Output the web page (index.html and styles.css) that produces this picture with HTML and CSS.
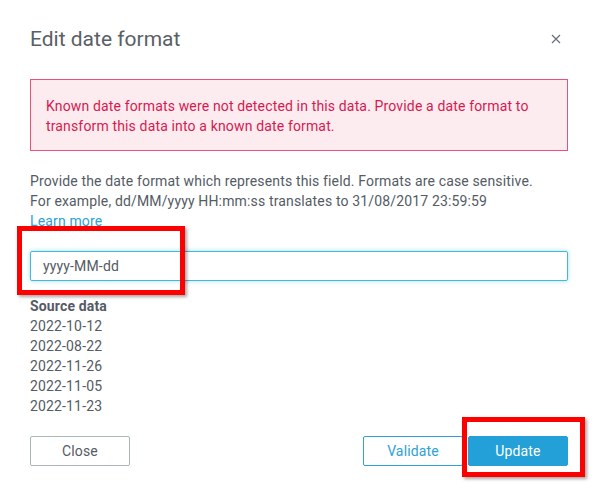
FILE: index.html
```html
<!DOCTYPE html>
<html lang="en">
<head>
    <meta charset="UTF-8">
    <meta name="viewport" content="width=device-width, initial-scale=1.0">
    <title>Edit date format</title>
    <link rel="stylesheet" href="styles.css">
</head>
<body>
    <div class="modal">
        <div class="modal-header">
            <h2>Edit date format</h2>
            <button class="close-x" aria-label="Close">
                <svg width="10" height="10" viewBox="0 0 10 10">
                    <path d="M1 1 L9 9 M9 1 L1 9" stroke="#687078" stroke-width="1.2" fill="none"/>
                </svg>
            </button>
        </div>

        <div class="alert">
            Known date formats were not detected in this data. Provide a date format to
            transform this data into a known date format.
        </div>

        <p class="desc">
            Provide the date format which represents this field. Formats are case sensitive.<br>
            For example, dd/MM/yyyy HH:mm:ss translates to 31/08/2017 23:59:59<br>
            <a href="#">Learn more</a>
        </p>

        <div class="field">
            <input type="text" value="yyyy-MM-dd">
            <span class="mark mark-input"></span>
        </div>

        <div class="source">
            <div class="source-label">Source data</div>
            <div>2022-10-12</div>
            <div>2022-08-22</div>
            <div>2022-11-26</div>
            <div>2022-11-05</div>
            <div>2022-11-23</div>
        </div>

        <div class="footer">
            <button class="btn">Close</button>
            <div class="actions">
                <button class="btn btn-outline">Validate</button>
                <div class="primary-wrap">
                    <button class="btn btn-primary">Update</button>
                    <span class="mark mark-button"></span>
                </div>
            </div>
        </div>
    </div>
</body>
</html>
```

FILE: styles.css
```css
body {
    margin: 0;
    padding: 0;
    background-color: #fff;
    font-family: Roboto, "Liberation Sans", sans-serif;
    font-size: 14px;
    line-height: 20px;
    letter-spacing: 0.15px;
    color: #545b64;
}

.modal {
    padding: 26px 27px 24px 30px;
}

.modal-header {
    display: flex;
    justify-content: space-between;
    align-items: center;
}

.modal-header h2 {
    margin: 0;
    font-size: 21px;
    font-weight: normal;
    line-height: 26px;
    letter-spacing: 0;
    color: #5a5f66;
}

.close-x {
    border: none;
    background: none;
    padding: 0;
    margin-right: 7px;
    width: 10px;
    height: 10px;
    display: flex;
}

.alert {
    margin-top: 27px;
    border: 1px solid #e9527a;
    background-color: #fcecf0;
    color: #d8184f;
    padding: 16px 15px 14px 15px;
}

.desc {
    margin: 20px 0 0 0;
}

.desc a {
    color: #2ea2d6;
    text-decoration: none;
}

.field {
    position: relative;
    margin-top: 20px;
}

.field input {
    display: block;
    box-sizing: border-box;
    width: 100%;
    height: 30px;
    border: 1px solid #44b9d6;
    border-radius: 2px;
    box-shadow: 0 0 4px rgba(68, 185, 214, 0.5);
    padding: 0 12px;
    font-family: inherit;
    font-size: 14px;
    letter-spacing: 0.15px;
    color: #545b64;
    outline: none;
}

.mark {
    position: absolute;
    box-sizing: border-box;
    border: 5px solid #f00;
    box-shadow: 2px 2px 3px rgba(0, 0, 0, 0.35);
}

.mark-input {
    left: -13px;
    top: -25px;
    width: 168px;
    height: 69px;
}

.source {
    margin-top: 15px;
}

.source-label {
    font-weight: bold;
}

.footer {
    display: flex;
    justify-content: space-between;
    margin-top: 20px;
}

.actions {
    display: flex;
    gap: 5px;
}

.primary-wrap {
    position: relative;
}

.btn {
    display: block;
    box-sizing: border-box;
    width: 100px;
    height: 30px;
    border: 1px solid #aab7b8;
    border-radius: 2px;
    background-color: #fff;
    font-family: inherit;
    font-size: 14px;
    letter-spacing: 0.15px;
    color: #545b64;
    padding: 0;
}

.btn-outline {
    border-color: #2ea2d6;
    color: #2ea2d6;
}

.btn-primary {
    border-color: #24a0d8;
    background-color: #24a0d8;
    color: #fff;
}

.mark-button {
    left: -6px;
    top: -19px;
    width: 123px;
    height: 60px;
}
```
